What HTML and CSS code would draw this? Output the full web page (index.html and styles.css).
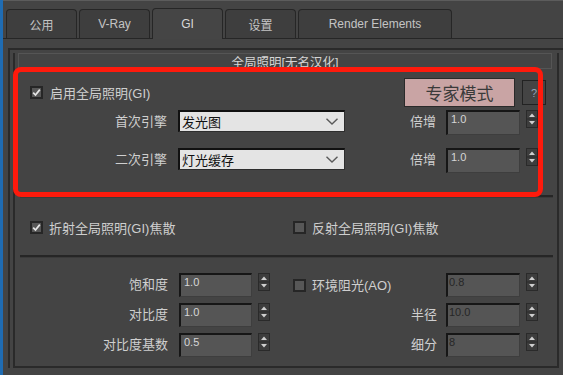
FILE: index.html
```html
<!DOCTYPE html>
<html lang="zh-CN">
<head>
    <meta charset="UTF-8">
    <meta name="viewport" content="width=device-width, initial-scale=1.0">
    <title>V-Ray GI</title>
    <link rel="stylesheet" href="styles.css">
</head>
<body>
    <div class="topline"></div>
    <div class="tabs">
        <div class="tab">公用</div>
        <div class="tab">V-Ray</div>
        <div class="tab active">GI</div>
        <div class="tab">设置</div>
        <div class="tab wide">Render Elements</div>
    </div>

    <div class="rollout">
        <div class="panel">
            <div class="rollout-title">全局照明[无名汉化]</div>

            <!-- GI engines -->
            <div class="group group-gi">
                <div class="row row-top">
                    <label class="check">
                        <span class="box"><svg width="9" height="9" viewBox="0 0 9 9"><path d="M1.2 4.6 L3.5 7 L7.8 1.6" fill="none" stroke="#e6e6e6" stroke-width="1.7"/></svg></span>
                        启用全局照明(GI)
                    </label>
                    <button class="expert">专家模式</button>
                    <button class="help">?</button>
                </div>
                <div class="row row-engine">
                    <span class="label engine-label">首次引擎</span>
                    <div class="select">发光图
                        <svg class="chevron" width="12" height="7" viewBox="0 0 12 7"><path d="M0.5 0.8 L6 6 L11.5 0.8" fill="none" stroke="#5a5a5a" stroke-width="1.4"/></svg>
                    </div>
                    <span class="label mult-label">倍增</span>
                    <div class="field">1.0</div>
                    <svg class="spin" width="12" height="18" viewBox="0 0 12 18"><rect x="0.5" y="0.5" width="11" height="17" fill="#3d3d3d" stroke="#2a2a2a"/><line x1="1" y1="9" x2="11" y2="9" stroke="#2a2a2a"/><path d="M3 7 H9 L6 3.5 Z" fill="#cfcfcf"/><path d="M3 11 H9 L6 14.5 Z" fill="#cfcfcf"/></svg>
                </div>
                <div class="row row-engine second">
                    <span class="label engine-label">二次引擎</span>
                    <div class="select">灯光缓存
                        <svg class="chevron" width="12" height="7" viewBox="0 0 12 7"><path d="M0.5 0.8 L6 6 L11.5 0.8" fill="none" stroke="#5a5a5a" stroke-width="1.4"/></svg>
                    </div>
                    <span class="label mult-label">倍增</span>
                    <div class="field">1.0</div>
                    <svg class="spin" width="12" height="18" viewBox="0 0 12 18"><rect x="0.5" y="0.5" width="11" height="17" fill="#3d3d3d" stroke="#2a2a2a"/><line x1="1" y1="9" x2="11" y2="9" stroke="#2a2a2a"/><path d="M3 7 H9 L6 3.5 Z" fill="#cfcfcf"/><path d="M3 11 H9 L6 14.5 Z" fill="#cfcfcf"/></svg>
                </div>
            </div>
            <div class="sep"></div>

            <!-- caustics -->
            <div class="group group-caustics">
                <label class="check caustic-left">
                    <span class="box"><svg width="9" height="9" viewBox="0 0 9 9"><path d="M1.2 4.6 L3.5 7 L7.8 1.6" fill="none" stroke="#e6e6e6" stroke-width="1.7"/></svg></span>
                    折射全局照明(GI)焦散
                </label>
                <label class="check">
                    <span class="box"></span>
                    反射全局照明(GI)焦散
                </label>
            </div>
            <div class="sep"></div>

            <!-- post processing / AO -->
            <div class="group group-post">
                <div class="col col-left">
                    <div class="prow">
                        <span class="label">饱和度</span>
                        <div class="field">1.0</div>
                        <svg class="spin" width="12" height="18" viewBox="0 0 12 18"><rect x="0.5" y="0.5" width="11" height="17" fill="#3d3d3d" stroke="#2a2a2a"/><line x1="1" y1="9" x2="11" y2="9" stroke="#2a2a2a"/><path d="M3 7 H9 L6 3.5 Z" fill="#cfcfcf"/><path d="M3 11 H9 L6 14.5 Z" fill="#cfcfcf"/></svg>
                    </div>
                    <div class="prow">
                        <span class="label">对比度</span>
                        <div class="field">1.0</div>
                        <svg class="spin" width="12" height="18" viewBox="0 0 12 18"><rect x="0.5" y="0.5" width="11" height="17" fill="#3d3d3d" stroke="#2a2a2a"/><line x1="1" y1="9" x2="11" y2="9" stroke="#2a2a2a"/><path d="M3 7 H9 L6 3.5 Z" fill="#cfcfcf"/><path d="M3 11 H9 L6 14.5 Z" fill="#cfcfcf"/></svg>
                    </div>
                    <div class="prow">
                        <span class="label">对比度基数</span>
                        <div class="field">0.5</div>
                        <svg class="spin" width="12" height="18" viewBox="0 0 12 18"><rect x="0.5" y="0.5" width="11" height="17" fill="#3d3d3d" stroke="#2a2a2a"/><line x1="1" y1="9" x2="11" y2="9" stroke="#2a2a2a"/><path d="M3 7 H9 L6 3.5 Z" fill="#cfcfcf"/><path d="M3 11 H9 L6 14.5 Z" fill="#cfcfcf"/></svg>
                    </div>
                </div>
                <div class="col col-right">
                    <div class="prow">
                        <label class="label check">
                            <span class="box"></span>
                            环境阻光(AO)
                        </label>
                        <div class="field off">0.8</div>
                        <svg class="spin" width="12" height="18" viewBox="0 0 12 18"><rect x="0.5" y="0.5" width="11" height="17" fill="#3d3d3d" stroke="#2a2a2a"/><line x1="1" y1="9" x2="11" y2="9" stroke="#2a2a2a"/><path d="M3 7 H9 L6 3.5 Z" fill="#cfcfcf"/><path d="M3 11 H9 L6 14.5 Z" fill="#cfcfcf"/></svg>
                    </div>
                    <div class="prow">
                        <span class="label">半径</span>
                        <div class="field off">10.0</div>
                        <svg class="spin" width="12" height="18" viewBox="0 0 12 18"><rect x="0.5" y="0.5" width="11" height="17" fill="#3d3d3d" stroke="#2a2a2a"/><line x1="1" y1="9" x2="11" y2="9" stroke="#2a2a2a"/><path d="M3 7 H9 L6 3.5 Z" fill="#cfcfcf"/><path d="M3 11 H9 L6 14.5 Z" fill="#cfcfcf"/></svg>
                    </div>
                    <div class="prow">
                        <span class="label">细分</span>
                        <div class="field off">8</div>
                        <svg class="spin" width="12" height="18" viewBox="0 0 12 18"><rect x="0.5" y="0.5" width="11" height="17" fill="#3d3d3d" stroke="#2a2a2a"/><line x1="1" y1="9" x2="11" y2="9" stroke="#2a2a2a"/><path d="M3 7 H9 L6 3.5 Z" fill="#cfcfcf"/><path d="M3 11 H9 L6 14.5 Z" fill="#cfcfcf"/></svg>
                    </div>
                </div>
            </div>
        </div>
    </div>

    <div class="highlight"></div>
</body>
</html>
```

FILE: styles.css
```css
* {
    margin: 0;
    padding: 0;
    box-sizing: border-box;
}

body {
    font-family: 'Liberation Sans', 'Noto Sans CJK SC', sans-serif;
    font-size: 13px;
    color: #d0d0d0;
    background: #444444;
    border-left: 3px solid #1f6cb3;
    height: 375px;
    overflow: hidden;
    position: relative;
}

.topline {
    height: 1px;
    background: #5c5c5c;
}

/* tabs */
.tabs {
    display: flex;
    align-items: flex-end;
    gap: 2px;
    height: 38px;
    padding-left: 3px;
    border-bottom: 1px solid #262626;
}

.tab {
    width: 71px;
    height: 29px;
    border: 1px solid #262626;
    border-bottom: none;
    border-radius: 4px 4px 0 0;
    background: #3e3e3e;
    color: #c4c4c4;
    font-size: 12px;
    display: flex;
    justify-content: center;
    align-items: center;
}

.tab.active {
    height: 31px;
    margin-bottom: -1px;
    background: #454545;
    color: #d8d8d8;
}

.tab.wide {
    width: 154px;
}

/* rollout */
.rollout {
    margin: 9px 0 0 5px;
    border-top: 2px solid #2a2a2a;
    border-left: 2px solid #2a2a2a;
    padding-left: 3px;
}

.panel {
    width: 546px;
    border: 2px solid #2a2a2a;
    border-top: none;
}

.rollout-title {
    margin: 3px 5px 0 3px;
    height: 16px;
    border: 1px solid #555555;
    padding-top: 2px;
    text-align: center;
    font-size: 12.5px;
    line-height: 14px;
    color: #d4d4d4;
}

.sep {
    margin: 0 4px 0 5px;
    height: 3px;
    border-top: 2px solid #262626;
    border-bottom: 1px solid #3a3a3a;
}

.row {
    display: flex;
    align-items: center;
}

.label {
    color: #cfcfcf;
    white-space: nowrap;
}

/* checkboxes */
.check {
    display: flex;
    align-items: center;
    gap: 6px;
    white-space: nowrap;
    color: #cfcfcf;
}

.box {
    width: 13px;
    height: 13px;
    border: 2px solid #262626;
    background: #575757;
    display: flex;
    justify-content: center;
    align-items: center;
    flex-shrink: 0;
}

/* group 1 */
.group-gi {
    height: 126px;
    padding-top: 9px;
}

.row-top {
    height: 29px;
    padding: 0 11px 0 15px;
}

.row-top .check {
    gap: 7px;
}

.expert {
    margin-left: auto;
    width: 111px;
    height: 29px;
    background: #c9a4a4;
    border: 1px solid #2a2a2a;
    color: #3a3a3a;
    font-family: 'Noto Sans CJK SC', sans-serif;
    font-size: 17px;
    line-height: 26px;
}

.help {
    margin-left: 7px;
    width: 24px;
    height: 25px;
    background: #444444;
    border: 1px solid #222222;
    color: #93a4b8;
    font-family: 'Liberation Sans', sans-serif;
    font-size: 11px;
}

.row-engine {
    height: 25px;
    margin-top: 3px;
    align-items: flex-start;
}

.row-engine.second {
    margin-top: 13px;
}

.row-engine .label {
    line-height: 24px;
}

.engine-label {
    width: 152px;
    margin-right: 11px;
    text-align: right;
}

.select {
    width: 167px;
    height: 22px;
    background: #e4e4e4;
    border-top: 2px solid #111111;
    border-left: 2px solid #111111;
    border-right: 1px solid #2e2e2e;
    border-bottom: 1px solid #2e2e2e;
    padding-left: 2px;
    display: flex;
    align-items: center;
    color: #111111;
    font-size: 13px;
}

.chevron {
    margin-left: auto;
    margin-right: 6px;
}

.mult-label {
    width: 27px;
    margin-left: 65px;
    margin-right: 9px;
}

.field {
    width: 74px;
    height: 25px;
    background: #555555;
    border-top: 2px solid #161616;
    border-left: 2px solid #161616;
    border-right: 1px solid #3e3e3e;
    border-bottom: 1px solid #3e3e3e;
    padding: 1px 0 0 3px;
    font-size: 11px;
    line-height: 13px;
    color: #d6d6d6;
}

.field.off {
    color: #262626;
    padding-left: 1px;
}

.spin {
    margin-left: 6px;
    flex-shrink: 0;
}

/* group 2 */
.group-caustics {
    display: flex;
    height: 57px;
    padding: 23px 0 0 15px;
}

.caustic-left {
    width: 263px;
}

.group-caustics .check {
    height: 13px;
}

/* group 3 */
.group-post {
    display: flex;
    height: 108px;
    padding-top: 15px;
}

.col {
    display: flex;
    flex-direction: column;
    gap: 6px;
}

.col-right {
    margin-left: 23px;
}

.prow {
    display: flex;
    align-items: flex-start;
    height: 24px;
}

.prow .label {
    line-height: 23px;
    text-align: right;
}

.col-left .label {
    width: 153px;
    margin-right: 11px;
}

.col-left .field {
    width: 73px;
    height: 24px;
}

.col-right .label {
    width: 144px;
    margin-right: 9px;
}

.col-right .check {
    height: 24px;
}

.col-right .field {
    height: 24px;
}

/* annotation */
.highlight {
    position: absolute;
    left: 10px;
    top: 67px;
    width: 530px;
    height: 130px;
    border: 5px solid #fe1a0c;
    border-radius: 8px;
    pointer-events: none;
}
```
